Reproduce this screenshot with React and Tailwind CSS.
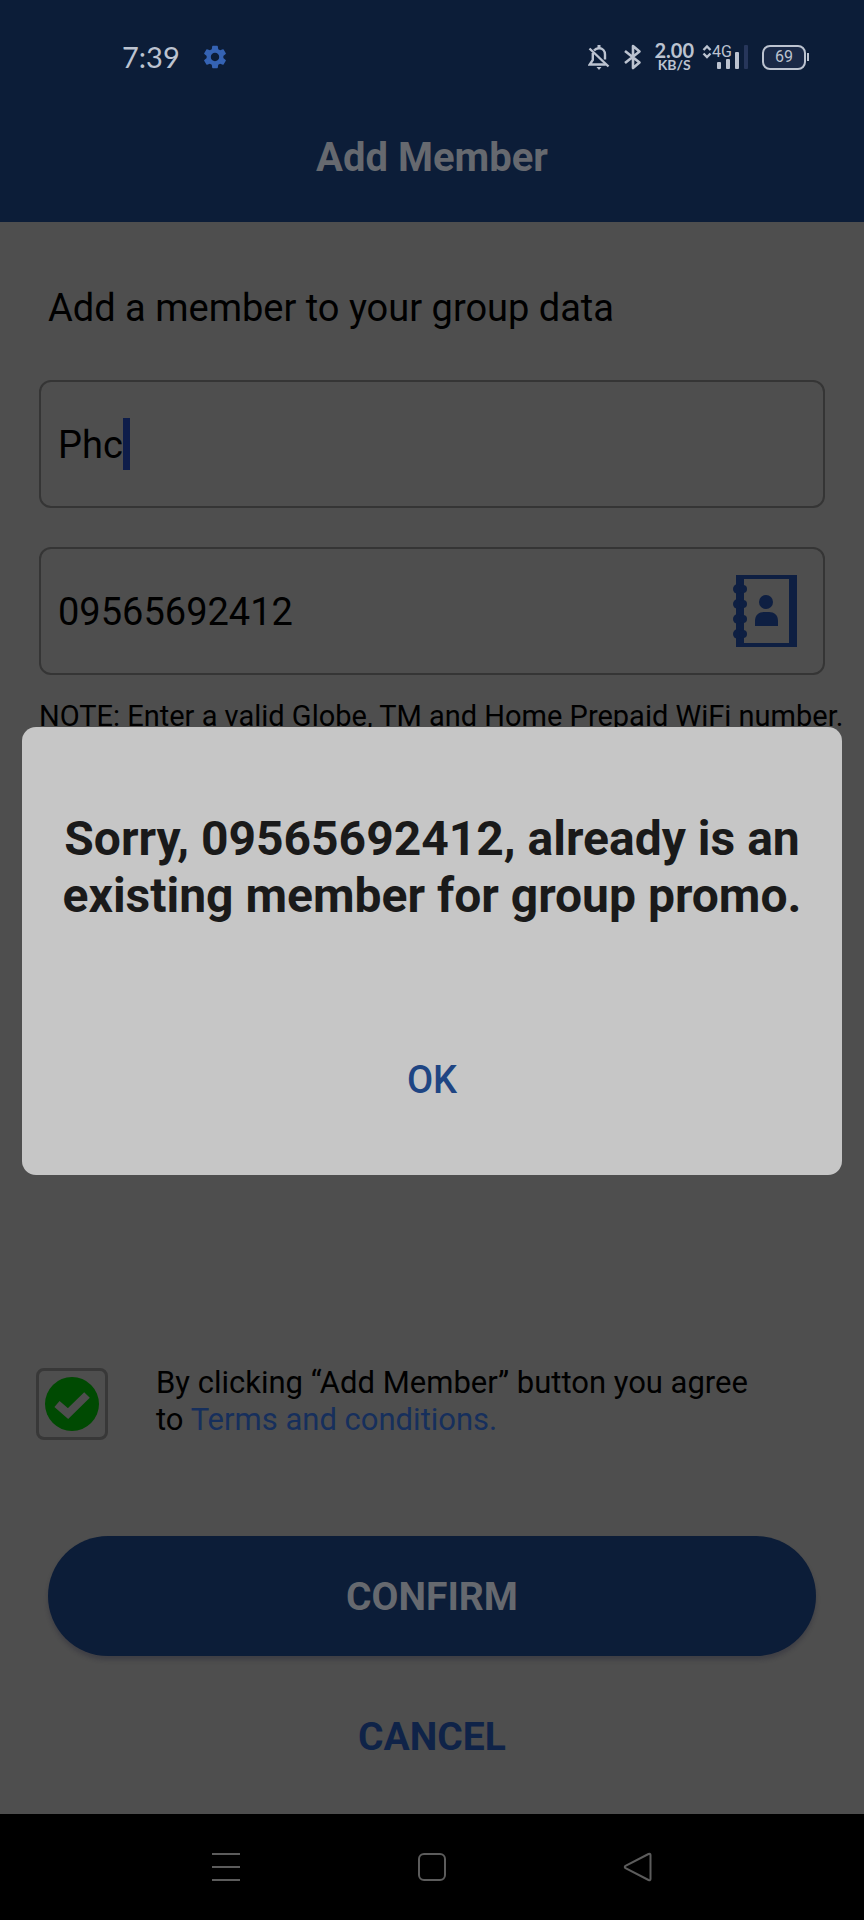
import React, { useState } from "react";
import { MdSettings } from "react-icons/md";

/* -------------------- Status Bar Icons -------------------- */

const BellOffIcon = () => (
  <svg width="22" height="26" viewBox="0 0 22 26" fill="none" stroke="currentColor" strokeWidth="2.400" className="shrink-0">
    <path d="M6 6.500C7.200 5 9 4.200 11 4.200c3.600 0 6 2.700 6 6.300v5" />
    <path d="M11 1v3" strokeWidth="3" />
    <path d="M4.800 9v7l-3 4.500h16" />
    <path d="M1.500 4.500l19 18" />
    <path d="M8.500 23h5l-2.500 3z" fill="currentColor" stroke="none" />
  </svg>
);

const BluetoothIcon = () => (
  <svg width="18" height="26" viewBox="0 0 18 26" fill="none" stroke="currentColor" strokeWidth="2.600" className="shrink-0">
    <path d="M1 7l14.500 11.500L9 24V2l6.500 5.500L1 19" strokeLinejoin="round" />
  </svg>
);

const SignalIcon = () => (
  <div className="relative h-[26px] w-[46px] shrink-0">
    <svg width="46" height="26" viewBox="0 0 46 26" fill="none">
      <path d="M1.500 6L5 2.500 8.500 6M1.500 9.500L5 13l3.500-3.500" stroke="currentColor" strokeWidth="2.400" />
      <rect x="15" y="18" width="4" height="7" rx="1" fill="currentColor" />
      <rect x="24" y="15" width="4" height="10" rx="1" fill="currentColor" />
      <rect x="33" y="8" width="4" height="17" rx="1" fill="currentColor" />
      <rect x="42" y="1" width="4" height="24" rx="1" fill="#27365a" />
    </svg>
    <span className="absolute top-0 left-[10px] text-base leading-4">4G</span>
  </div>
);

const BatteryIcon = ({ level }) => (
  <div className="flex shrink-0 items-center">
    <div className="flex h-[25px] w-[44px] items-center justify-center rounded-lg border-2 border-current bg-[#1a2947] text-base leading-4">
      {level}
    </div>
    <div className="ml-px h-2 w-[2px] bg-current" />
  </div>
);

/* -------------------- Form Icons -------------------- */

const ContactsIcon = () => (
  <svg width="66" height="72" viewBox="0 0 66 72" fill="#0e1f42">
    <path fillRule="evenodd" d="M4 0h61v72H4zM12 4v64h45V4z" />
    <circle cx="6" cy="14" r="5" />
    <circle cx="6" cy="29" r="5" />
    <circle cx="6" cy="44" r="5" />
    <circle cx="6" cy="59" r="5" />
    <circle cx="11" cy="14" r="4" />
    <circle cx="11" cy="29" r="4" />
    <circle cx="11" cy="44" r="4" />
    <circle cx="11" cy="59" r="4" />
    <circle cx="34" cy="27" r="7" />
    <path d="M23 51v-5c0-6 4-9 9-9h5c5 0 9 3 9 9v5z" />
  </svg>
);

const CheckIcon = () => (
  <svg width="54" height="54" viewBox="0 0 54 54" className="pointer-events-none col-start-1 row-start-1">
    <circle cx="27" cy="27" r="27" fill="#004a02" />
    <path d="M12 27l11 9.500L42 18" fill="none" stroke="#4e4e4e" strokeWidth="8" />
  </svg>
);

/* -------------------- Sections -------------------- */

const StatusBar = () => (
  <div className="flex items-center justify-between pt-[42px] pr-[55px] pl-[122px] text-[#bcc3d0]">
    <div className="flex items-center gap-[21px]">
      <span className="font-[Lato] text-[29px] leading-[30px]">7:39</span>
      <MdSettings size={28} color="#3563b4" />
    </div>
    <div className="flex items-center">
      <BellOffIcon />
      <div className="ml-[14px]">
        <BluetoothIcon />
      </div>
      <div className="ml-3 flex flex-col items-center font-[Lato] font-bold">
        <span className="text-xl leading-4">2.00</span>
        <span className="text-sm leading-[14px]">KB/S</span>
      </div>
      <div className="mr-[14px] ml-2">
        <SignalIcon />
      </div>
      <BatteryIcon level={69} />
    </div>
  </div>
);

const FieldBox = ({ children }) => (
  <div className="flex h-32 items-center rounded-xl border-2 border-[#353535] pr-[25px] pl-[17px]">
    {children}
  </div>
);

const NavBar = () => (
  <nav className="flex h-[106px] items-center justify-center gap-[176px] bg-black text-[#5c5c5c]">
    <button type="button" aria-label="Recent apps">
      <svg width="30" height="30" viewBox="0 0 30 30" fill="none" stroke="currentColor" strokeWidth="2">
        <path d="M1 2h28M1 15h28M1 28h28" />
      </svg>
    </button>
    <button type="button" aria-label="Home">
      <svg width="30" height="30" viewBox="0 0 30 30" fill="none" stroke="currentColor" strokeWidth="2">
        <rect x="2" y="2" width="26" height="26" rx="5" />
      </svg>
    </button>
    <button type="button" aria-label="Back">
      <svg width="30" height="30" viewBox="0 0 30 30" fill="none" stroke="currentColor" strokeWidth="2" strokeLinejoin="round">
        <path d="M2.500 13.800L25.500 2q2-.8 2 1v24q0 1.800-2 1L2.500 16.200q-1.500-1.200 0-2.400z" />
      </svg>
    </button>
  </nav>
);

/* -------------------- Main Component -------------------- */

export default function App() {
  const [name, setName] = useState("Phc");
  const [number, setNumber] = useState("09565692412");
  const [agreed, setAgreed] = useState(true);
  const [showError, setShowError] = useState(true);

  return (
    <div className="relative flex min-h-screen flex-col bg-[#4e4e4e] font-[Roboto,sans-serif] text-black">
      <header className="bg-[#0c1d38] pb-[41px]">
        <StatusBar />
        <h1 className="mt-[62px] text-center text-[40px] leading-[47px] font-bold text-[#66696f]">
          Add Member
        </h1>
      </header>

      <main className="flex flex-1 flex-col">
        <div className="px-[39px]">
          <h2 className="mt-[63px] pl-[9px] text-[38px] leading-[46px]">
            Add a member to your group data
          </h2>

          {/* Member details */}
          <div className="mt-[49px] flex flex-col gap-[39px]">
            <FieldBox>
              <input
                type="text"
                aria-label="Member name"
                value={name}
                onChange={(e) => setName(e.target.value)}
                className="field-sizing-content pt-[2px] text-[38px] leading-[46px] caret-transparent outline-none"
              />
              <span className="h-[52px] w-[7px] bg-[#0e1d4a]" />
            </FieldBox>
            <FieldBox>
              <input
                type="tel"
                aria-label="Mobile number"
                value={number}
                onChange={(e) => setNumber(e.target.value)}
                className="min-w-0 flex-1 pt-[2px] text-[38px] leading-[46px] outline-none"
              />
              <button type="button" aria-label="Choose from contacts">
                <ContactsIcon />
              </button>
            </FieldBox>
          </div>
        </div>

        <p className="mt-6 pl-[39px] text-[29px] leading-[34px] whitespace-nowrap">
          NOTE: Enter a valid Globe, TM and Home Prepaid WiFi number.
        </p>

        {/* Terms */}
        <div className="mt-auto flex items-start gap-12 pr-[90px] pl-9">
          <div className="grid shrink-0 place-items-center">
            <input
              id="agree"
              type="checkbox"
              checked={agreed}
              onChange={(e) => setAgreed(e.target.checked)}
              className="col-start-1 row-start-1 size-[72px] appearance-none rounded-lg border-[3px] border-[#383838]"
            />
            {agreed && <CheckIcon />}
          </div>
          <label htmlFor="agree" className="-mt-1 text-[31px] leading-[37px]">
            By clicking “Add Member” button you agree to{" "}
            <a href="#terms" className="text-[#162f5c]">
              Terms and conditions.
            </a>
          </label>
        </div>

        <div className="mt-24 mb-[43px] flex flex-col gap-[47px] px-12">
          <button
            type="button"
            className="h-[120px] rounded-full bg-[#0c1d38] pt-[2px] text-[39px] font-bold text-[#66696f] shadow-[0_4px_4px_rgba(30,30,50,0.3)]"
          >
            CONFIRM
          </button>
          <button type="button" className="self-center text-[39px] leading-[68px] font-bold text-[#0f2348]">
            CANCEL
          </button>
        </div>
      </main>

      <NavBar />

      {/* Error dialog */}
      {showError && (
        <div className="absolute inset-0 flex items-center px-[22px] pb-[18px]">
          <div
            role="alertdialog"
            aria-labelledby="error-text"
            className="flex w-full flex-col items-center rounded-[14px] bg-[#c6c6c6] px-8 pt-[83px] pb-[60px]"
          >
            <p id="error-text" className="text-center text-[48px] leading-[57px] font-bold text-[#1a1a1a]">
              Sorry, 09565692412, already is an existing member for group promo.
            </p>
            <button
              type="button"
              onClick={() => setShowError(false)}
              className="mt-[121px] px-4 text-[38px] leading-[70px] font-medium text-[#1e4583]"
            >
              OK
            </button>
          </div>
        </div>
      )}
    </div>
  );
}
